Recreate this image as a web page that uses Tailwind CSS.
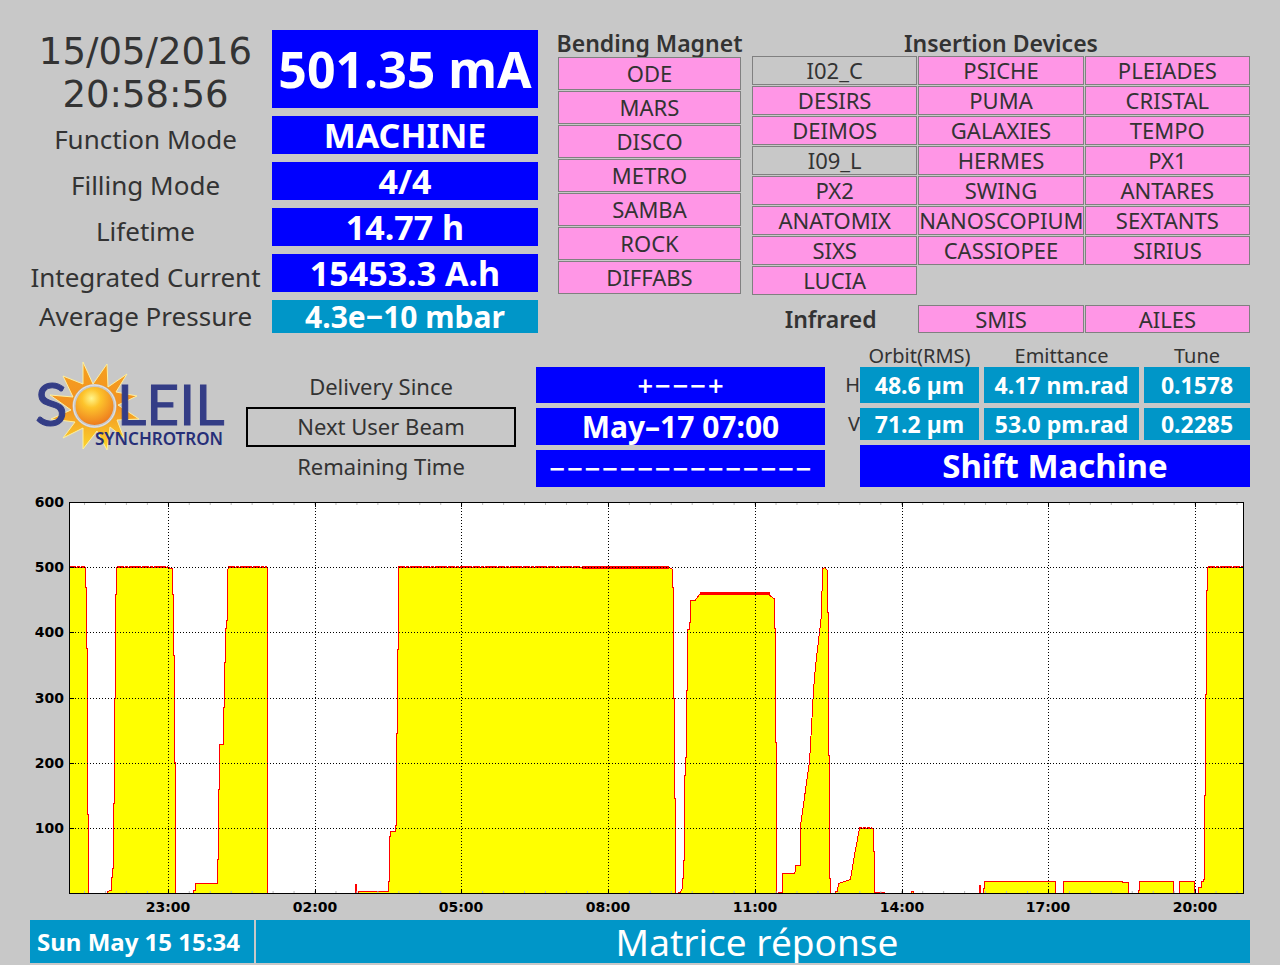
<!DOCTYPE html>
<html lang="en">
<head>
    <meta charset="UTF-8">
    <meta name="viewport" content="width=device-width, initial-scale=1.0">
    <title>SOLEIL - Machine Status</title>
    <script src="https://cdn.jsdelivr.net/npm/@tailwindcss/browser@4"></script>
</head>
<body class="bg-[#c8c8c8] text-[#333333] font-['Noto_Sans',sans-serif]">
    <main class="px-[30px] pt-[30px]">

        <!-- Machine state and beamlines -->
        <section class="grid grid-cols-[minmax(0,517fr)_minmax(0,183fr)_minmax(0,498fr)] gap-x-[11px] items-start">
            <dl class="grid grid-cols-[minmax(0,231fr)_minmax(0,266fr)] gap-x-[11px] gap-y-2 pr-[9px] text-center whitespace-nowrap">
                <dt class="h-[78px] font-['DejaVu_Sans',sans-serif] text-[37px] leading-[43px]">15/05/2016<br>20:58:56</dt>
                <dd class="h-[78px] bg-[#0000ff] text-white font-bold text-[50px] leading-[78px]">501.35 mA</dd>
                <dt class="h-[38px] text-[26px] leading-[46px]">Function Mode</dt>
                <dd class="h-[38px] bg-[#0000ff] text-white font-bold text-[34px] leading-[38px]">MACHINE</dd>
                <dt class="h-[38px] text-[26px] leading-[46px]">Filling Mode</dt>
                <dd class="h-[38px] bg-[#0000ff] text-white font-bold text-[34px] leading-[38px]">4/4</dd>
                <dt class="h-[38px] text-[26px] leading-[46px]">Lifetime</dt>
                <dd class="h-[38px] bg-[#0000ff] text-white font-bold text-[34px] leading-[38px]">14.77 h</dd>
                <dt class="h-[38px] text-[26px] leading-[46px]">Integrated Current</dt>
                <dd class="h-[38px] bg-[#0000ff] text-white font-bold text-[34px] leading-[38px]">15453.3 A.h</dd>
                <dt class="h-[33px] text-[26px] leading-[33px]">Average Pressure</dt>
                <dd class="h-[33px] bg-[#0096c8] text-white font-bold text-[30px] leading-[33px]">4.3e−10 mbar</dd>
            </dl>

            <div>
                <h2 class="-mx-1 h-[27px] text-[23px] leading-[27px] font-semibold text-center whitespace-nowrap">Bending Magnet</h2>
                <ul class="grid gap-px text-[22px] leading-[31px] text-center">
                    <li class="border border-[#808080] bg-[#ff96e6]">ODE</li>
                    <li class="border border-[#808080] bg-[#ff96e6]">MARS</li>
                    <li class="border border-[#808080] bg-[#ff96e6]">DISCO</li>
                    <li class="border border-[#808080] bg-[#ff96e6]">METRO</li>
                    <li class="border border-[#808080] bg-[#ff96e6]">SAMBA</li>
                    <li class="border border-[#808080] bg-[#ff96e6]">ROCK</li>
                    <li class="border border-[#808080] bg-[#ff96e6]">DIFFABS</li>
                </ul>
            </div>

            <div>
                <h2 class="h-[26px] text-[23px] leading-[26px] font-semibold text-center">Insertion Devices</h2>
                <ul class="grid grid-cols-3 gap-px text-[22px] leading-[27px] text-center">
                    <li class="border border-[#808080]">I02_C</li>
                    <li class="border border-[#808080] bg-[#ff96e6]">PSICHE</li>
                    <li class="border border-[#808080] bg-[#ff96e6]">PLEIADES</li>
                    <li class="border border-[#808080] bg-[#ff96e6]">DESIRS</li>
                    <li class="border border-[#808080] bg-[#ff96e6]">PUMA</li>
                    <li class="border border-[#808080] bg-[#ff96e6]">CRISTAL</li>
                    <li class="border border-[#808080] bg-[#ff96e6]">DEIMOS</li>
                    <li class="border border-[#808080] bg-[#ff96e6]">GALAXIES</li>
                    <li class="border border-[#808080] bg-[#ff96e6]">TEMPO</li>
                    <li class="border border-[#808080]">I09_L</li>
                    <li class="border border-[#808080] bg-[#ff96e6]">HERMES</li>
                    <li class="border border-[#808080] bg-[#ff96e6]">PX1</li>
                    <li class="border border-[#808080] bg-[#ff96e6]">PX2</li>
                    <li class="border border-[#808080] bg-[#ff96e6]">SWING</li>
                    <li class="border border-[#808080] bg-[#ff96e6]">ANTARES</li>
                    <li class="border border-[#808080] bg-[#ff96e6]">ANATOMIX</li>
                    <li class="border border-[#808080] bg-[#ff96e6]">NANOSCOPIUM</li>
                    <li class="border border-[#808080] bg-[#ff96e6]">SEXTANTS</li>
                    <li class="border border-[#808080] bg-[#ff96e6]">SIXS</li>
                    <li class="border border-[#808080] bg-[#ff96e6]">CASSIOPEE</li>
                    <li class="border border-[#808080] bg-[#ff96e6]">SIRIUS</li>
                    <li class="border border-[#808080] bg-[#ff96e6]">LUCIA</li>
                </ul>
                <div class="grid grid-cols-3 gap-px mt-[10px] text-[22px] leading-[26px] text-center">
                    <h2 class="font-semibold text-[23px] leading-[28px] pr-2">Infrared</h2>
                    <div class="border border-[#808080] bg-[#ff96e6]">SMIS</div>
                    <div class="border border-[#808080] bg-[#ff96e6]">AILES</div>
                </div>
            </div>
        </section>

        <!-- Logo, delivery and beam parameters -->
        <section class="grid grid-cols-[196fr_270fr_289fr_405fr] gap-x-5 mt-3">
            <svg class="w-full h-auto mt-3" viewBox="30 357 196 98" role="img" aria-label="Soleil Synchrotron">
                <defs>
                    <radialGradient id="ball" cx="0.42" cy="0.3" r="0.7">
                        <stop offset="0" stop-color="#fff58c"/>
                        <stop offset="0.35" stop-color="#fdc42c"/>
                        <stop offset="1" stop-color="#ee7d1e"/>
                    </radialGradient>
                    <linearGradient id="rays" x1="0" y1="0" x2="0" y2="1">
                        <stop offset="0" stop-color="#f6a01e"/>
                        <stop offset="0.5" stop-color="#f29222"/>
                        <stop offset="1" stop-color="#fcd62c"/>
                    </linearGradient>
                </defs>
                <path d="M83 362 93 384 107 364 108 387 127 374 116 392 137 396 118 405 139 419 117 420 124 438 110 427 107 450 97 431 83 449 83 428 63 438 75 422 51 419 71 410 50 395 73 397 63 376 83 384Z"
                    fill="url(#rays)" stroke="#fdf0a0" stroke-width="1"/>
                <circle cx="94.500" cy="406" r="22" fill="#c8c8c8"/>
                <circle cx="94.500" cy="406" r="21" fill="none" stroke="#e6e6e6" stroke-width="1"/>
                <circle cx="94.500" cy="406" r="19" fill="url(#ball)"/>
                <g fill="#343d86" stroke="#343d86" font-family="Lato, sans-serif">
                    <text x="35" y="426" font-size="60" stroke-width="1">S</text>
                    <text x="117" y="425" font-size="57" stroke-width="1">LEIL</text>
                    <text x="95" y="445" font-size="17" stroke="none" font-family="'Noto Sans', sans-serif" font-weight="600" fill="#272f78">SYNCHROTRON</text>
                </g>
            </svg>

            <div class="pt-[22px] text-[22px] leading-[38px] text-center">
                <div class="h-[40px]">Delivery Since</div>
                <div class="h-[40px] border-2 border-black leading-[35px]">Next User Beam</div>
                <div class="h-[40px] leading-[38px]">Remaining Time</div>
            </div>

            <div class="grid grid-rows-[36px_37px_37px] gap-[5px] pt-[22px] text-[30px] text-white text-center font-bold whitespace-nowrap">
                <div class="bg-[#0000ff] font-['DejaVu_Sans',sans-serif] text-[21px] leading-[38px]">+−−−+</div>
                <div class="bg-[#0000ff] leading-[37px]">May–17 07:00</div>
                <div class="bg-[#0000ff] font-['DejaVu_Sans',sans-serif] text-[21px] leading-[38px]">−−−−−−−−−−−−−−−</div>
            </div>

            <div>
                <table class="w-full table-fixed text-center whitespace-nowrap">
                    <colgroup>
                        <col class="w-[15px]">
                        <col class="w-[119px]">
                        <col class="w-[160px]">
                        <col>
                    </colgroup>
                    <thead>
                        <tr class="h-[22px] text-[20px] leading-[22px]">
                            <td></td>
                            <th scope="col" class="font-normal">Orbit(RMS)</th>
                            <th scope="col" class="font-normal pl-[5px]">Emittance</th>
                            <th scope="col" class="font-normal pl-[5px]">Tune</th>
                        </tr>
                    </thead>
                    <tbody>
                        <tr class="text-[23px] leading-[36px]">
                            <th scope="row" class="p-0 text-[20px] font-normal text-right">H</th>
                            <td><div class="bg-[#0096c8] text-white font-bold">48.6 µm</div></td>
                            <td class="pl-[5px]"><div class="bg-[#0096c8] text-white font-bold">4.17 nm.rad</div></td>
                            <td class="pl-[5px]"><div class="bg-[#0096c8] text-white font-bold">0.1578</div></td>
                        </tr>
                        <tr class="text-[23px] leading-[32px]">
                            <th scope="row" class="p-0 pt-[5px] text-[20px] font-normal text-right">V</th>
                            <td class="pt-[5px]"><div class="bg-[#0096c8] text-white font-bold">71.2 µm</div></td>
                            <td class="pt-[5px] pl-[5px]"><div class="bg-[#0096c8] text-white font-bold">53.0 pm.rad</div></td>
                            <td class="pt-[5px] pl-[5px]"><div class="bg-[#0096c8] text-white font-bold">0.2285</div></td>
                        </tr>
                    </tbody>
                </table>
                <div class="h-[42px] mt-[5px] ml-[15px] bg-[#0000ff] text-white text-center font-bold text-[33px] leading-[42px]">Shift Machine</div>
            </div>
        </section>

        <!-- Stored current over the last 24 hours -->
        <svg class="block w-full h-auto mt-[10px]" viewBox="30 497 1220 423" role="img" aria-label="Stored current, last 24 hours">
            <rect x="69" y="502" width="1175" height="392" fill="#fff"/>

            <!-- beam current -->
            <g fill="#ff0" stroke="#f00" stroke-width="1" shape-rendering="crispEdges">
                <path d="M69.500 893.500V567.500H85.500V587H86.500V648H87.500V814H88.500V893.500"/>
                <path d="M107.500 893.500V891.500L111.500 890V877H112.500V868H113.500V803H114.500V698H115.500V594H116.500V567.500H168L172.500 569V594H173.500V655H174.500V762H175.500V893.500"/>
                <path d="M193.500 893.500V890H195.500V883.500H217.500V859H218.500V789H219.500V744.500H223.500V707H224.500V662H225.500V628H226.500V620H227.500V570L229 567.500H267.500V893.500"/>
                <path d="M355.500 893.500V884V893.500M358.500 893.500V891.500H388.500V881H389.500V836H390.500V831.500H395.500V825H396.500V733H397.500V649H398.500V567.500H669L672.500 569.500V587H673.500V698H674.500V798H675.500V893.500"/>
                <path d="M678 893.500V892.500H680L682.500 888V878H683.500V860H684.500V775H685.500V757H686.500V690H687.500V629H689.500V622H690.500V600.500H695L700 594H768L774.500 599V628H775.500V742H776.500V893.500"/>
                <path d="M778.500 893.500V892.500H782.500V873.500H794L795.500 871V865.500H800.500V826L805.500 790L809.500 762L811.500 727L813.500 690L815.500 666L821.500 615L822.500 568.500L825 567.500L827.500 571V612H828.500V755H829.500V878H830.500V893.500"/>
                <path d="M835.500 893.500V891.500H837.500L838.500 883.500L843 882L850.500 879.500L854.500 855L859.500 828.500H873.500V851H874.500V892.500H885"/>
                <path d="M911.500 893.500V891.500H913.500V893.500M979.500 893.500V885.500V893.500"/>
                <path d="M983.500 893.500V888H984.500V881.500H1055.500V893.500"/>
                <path d="M1063.500 893.500V881.500H1122.500V882.500H1128.500V893.500"/>
                <path d="M1138.500 893.500V890H1139.500V881.500H1173.500V893.500"/>
                <path d="M1179.500 893.500V881.500H1194.500V893.500"/>
                <path d="M1198.500 893.500V887.500H1201.500V881.500H1203.500V879H1204.500V795H1205.500V694H1206.500V590H1207.500V567.500H1243.500V893.500"/>
            </g>
            <g fill="none" stroke="#f00" shape-rendering="crispEdges">
                <path d="M69 566.500H85M117 566.500H168M228 566.500H267M398 566.500H581M1208 566.500H1243" stroke-dasharray="7 1 3 1 12 1"/>
                <path d="M582 567.500H669M700 593.500H770" stroke-width="3"/>
                <path d="M356 884V893M980 885V893" stroke-width="2"/>
                <path d="M859 827.500H872" stroke-dasharray="3 1"/>
            </g>

            <!-- grid -->
            <path d="M69 567.500H1243M69 632.500H1243M69 698.500H1243M69 763.500H1243M69 828.500H1243M168.500 502V893M315.500 502V893M461.500 502V893M608.500 502V893M755.500 502V893M902.500 502V893M1048.500 502V893M1195.500 502V893"
                fill="none" stroke="#000" stroke-dasharray="1 2" shape-rendering="crispEdges"/>
            <path d="M84 504H1243M84 892H1243" fill="none" stroke="#b8b8b8" stroke-width="2" stroke-dasharray="1 19.955"/>
            <path d="M168.500 502v5m0 382v5M315.500 502v5m0 382v5M461.500 502v5m0 382v5M608.500 502v5m0 382v5M755.500 502v5m0 382v5M902.500 502v5m0 382v5M1048.500 502v5m0 382v5M1195.500 502v5m0 382v5M69 567.500h5m1165 0h5M69 632.500h5m1165 0h5M69 698.500h5m1165 0h5M69 763.500h5m1165 0h5M69 828.500h5m1165 0h5"
                fill="none" stroke="#000" shape-rendering="crispEdges"/>
            <rect x="69.500" y="502.500" width="1174" height="391" fill="none" stroke="#000" shape-rendering="crispEdges"/>

            <g font-family="'DejaVu Sans', sans-serif" font-size="14" font-weight="700" fill="#000" text-anchor="end">
                <text x="64" y="507">600</text>
                <text x="64" y="572">500</text>
                <text x="64" y="637">400</text>
                <text x="64" y="703">300</text>
                <text x="64" y="768">200</text>
                <text x="64" y="833">100</text>
            </g>
            <g font-family="'DejaVu Sans', sans-serif" font-size="14" font-weight="700" fill="#000" text-anchor="middle">
                <text x="168" y="912">23:00</text>
                <text x="315" y="912">02:00</text>
                <text x="461" y="912">05:00</text>
                <text x="608" y="912">08:00</text>
                <text x="755" y="912">11:00</text>
                <text x="902" y="912">14:00</text>
                <text x="1048" y="912">17:00</text>
                <text x="1195" y="912">20:00</text>
            </g>
        </svg>

        <!-- Last operator message -->
        <footer class="flex gap-[2px] text-white leading-[43px] whitespace-nowrap">
            <time class="w-[224px] pl-[7px] bg-[#0096c8] font-bold text-[24px]">Sun May 15 15:34</time>
            <p class="flex-1 pl-2 bg-[#0096c8] text-center text-[37px]">Matrice réponse</p>
        </footer>
    </main>
</body>
</html>
